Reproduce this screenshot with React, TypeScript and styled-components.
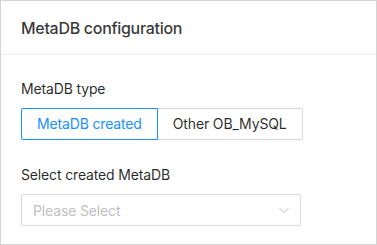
import React, { useState } from 'react'
import styled, { createGlobalStyle } from 'styled-components'

const GlobalStyle = createGlobalStyle`
  html, body {
    margin: 0;
    padding: 0;
    background: #ffffff;
  }
  body {
    font-family: Inter, "Noto Sans", "Liberation Sans", sans-serif;
    color: rgba(0, 0, 0, 0.85);
    -webkit-font-smoothing: antialiased;
  }
`

const Card = styled.div`
  box-sizing: border-box;
  width: 377px;
  height: 245px;
  border: 1px solid #d4d4d4;
  background: #ffffff;
  display: flex;
  flex-direction: column;
`

const CardHead = styled.div`
  box-sizing: border-box;
  height: 54px;
  padding: 0 20px;
  display: flex;
  align-items: center;
  border-bottom: 1px solid #ececec;
  font-size: 16px;
  font-weight: 500;
  letter-spacing: -0.3px;
  color: rgba(0, 0, 0, 0.8);
`

const CardBody = styled.div`
  padding: 23px 20px 0 20px;
  display: flex;
  flex-direction: column;
  gap: 24px;
`

const FormItem = styled.div`
  display: flex;
  flex-direction: column;
  gap: 8px;
`

const Label = styled.label`
  font-size: 14px;
  line-height: 22px;
  letter-spacing: -0.15px;
  color: rgba(0, 0, 0, 0.85);
`

const RadioGroup = styled.div`
  display: flex;
`

const RadioButton = styled.button<{ checked: boolean }>`
  box-sizing: border-box;
  height: 32px;
  padding: 0 15px;
  font-family: inherit;
  font-size: 14px;
  line-height: 30px;
  letter-spacing: -0.15px;
  background: #ffffff;
  cursor: pointer;
  color: ${({ checked }) => (checked ? '#1890ff' : 'rgba(0, 0, 0, 0.85)')};
  border: 1px solid ${({ checked }) => (checked ? '#1890ff' : '#d9d9d9')};
  margin-left: ${({ checked }) => (checked ? '0' : '-1px')};
  position: relative;
  z-index: ${({ checked }) => (checked ? 1 : 0)};

  &:first-child {
    margin-left: 0;
    border-radius: 2px 0 0 2px;
  }
  &:last-child {
    border-radius: 0 2px 2px 0;
  }
`

const Select = styled.div`
  box-sizing: border-box;
  width: 280px;
  height: 32px;
  padding: 0 10px 0 11px;
  border: 1px solid #d9d9d9;
  border-radius: 2px;
  display: flex;
  align-items: center;
  justify-content: space-between;
  cursor: pointer;
`

const Placeholder = styled.span`
  font-size: 14px;
  letter-spacing: -0.15px;
  color: #bfbfbf;
`

const Arrow = styled.svg`
  width: 12px;
  height: 12px;
  color: #bfbfbf;
`

export default function App() {
  const [type, setType] = useState('created')

  return (
    <>
      <GlobalStyle />
      <Card>
        <CardHead>MetaDB configuration</CardHead>
        <CardBody>
          <FormItem>
            <Label>MetaDB type</Label>
            <RadioGroup>
              <RadioButton checked={type === 'created'} onClick={() => setType('created')}>
                MetaDB created
              </RadioButton>
              <RadioButton checked={type === 'other'} onClick={() => setType('other')}>
                Other OB_MySQL
              </RadioButton>
            </RadioGroup>
          </FormItem>
          <FormItem>
            <Label>Select created MetaDB</Label>
            <Select>
              <Placeholder>Please Select</Placeholder>
              <Arrow viewBox="0 0 12 12" fill="none">
                <path d="M1.5 4l4.5 4.5L10.5 4" stroke="currentColor" strokeWidth="1" />
              </Arrow>
            </Select>
          </FormItem>
        </CardBody>
      </Card>
    </>
  )
}
